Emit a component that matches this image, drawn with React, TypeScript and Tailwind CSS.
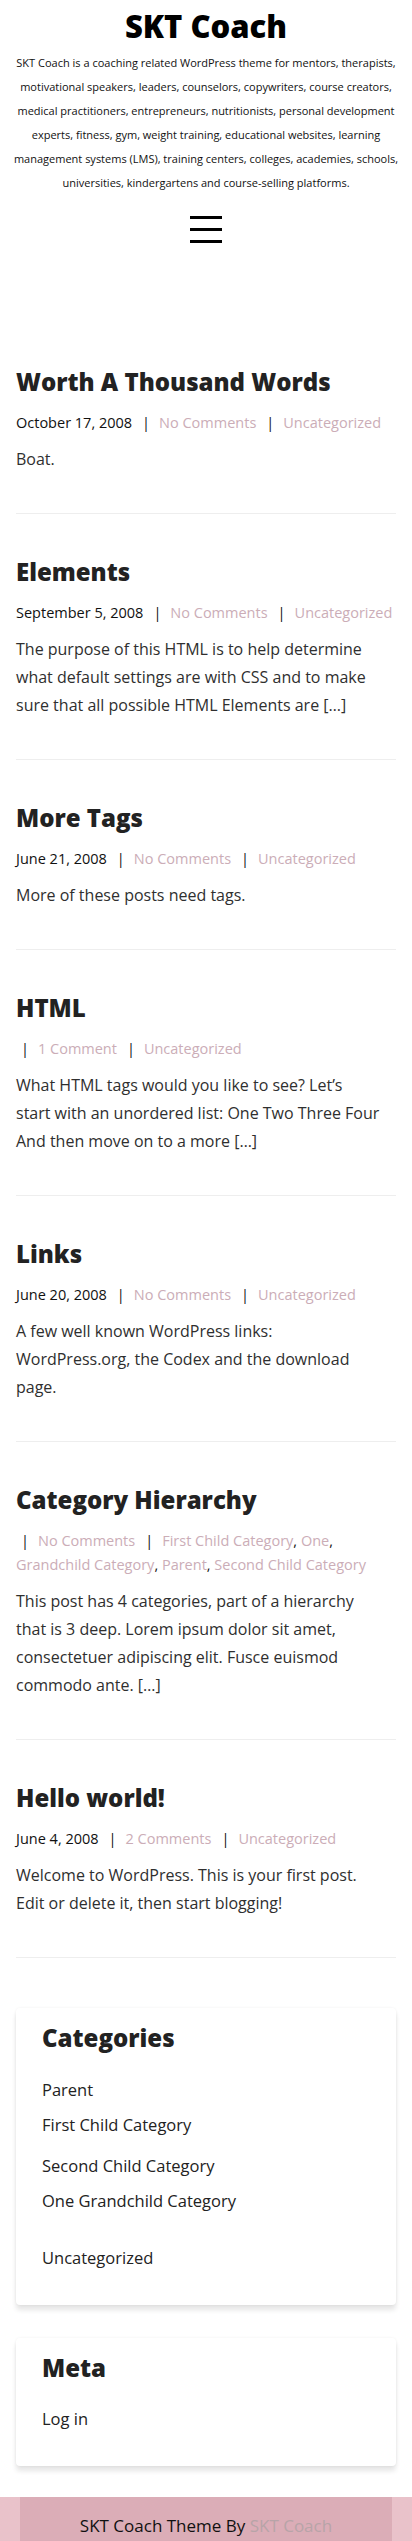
type Post = {
  title: string;
  date: string;
  comments: string;
  cats: string[][];
  body: string[];
};

const posts: Post[] = [
  {
    title: 'Worth A Thousand Words',
    date: 'October 17, 2008',
    comments: 'No Comments',
    cats: [['Uncategorized']],
    body: ['Boat.'],
  },
  {
    title: 'Elements',
    date: 'September 5, 2008',
    comments: 'No Comments',
    cats: [['Uncategorized']],
    body: [
      'The purpose of this HTML is to help determine',
      'what default settings are with CSS and to make',
      'sure that all possible HTML Elements are […]',
    ],
  },
  {
    title: 'More Tags',
    date: 'June 21, 2008',
    comments: 'No Comments',
    cats: [['Uncategorized']],
    body: ['More of these posts need tags.'],
  },
  {
    title: 'HTML',
    date: '',
    comments: '1 Comment',
    cats: [['Uncategorized']],
    body: [
      'What HTML tags would you like to see? Let’s',
      'start with an unordered list: One Two Three Four',
      'And then move on to a more […]',
    ],
  },
  {
    title: 'Links',
    date: 'June 20, 2008',
    comments: 'No Comments',
    cats: [['Uncategorized']],
    body: [
      'A few well known WordPress links:',
      'WordPress.org, the Codex and the download',
      'page.',
    ],
  },
  {
    title: 'Category Hierarchy',
    date: '',
    comments: 'No Comments',
    cats: [
      ['First Child Category', 'One'],
      ['Grandchild Category', 'Parent', 'Second Child Category'],
    ],
    body: [
      'This post has 4 categories, part of a hierarchy',
      'that is 3 deep. Lorem ipsum dolor sit amet,',
      'consectetuer adipiscing elit. Fusce euismod',
      'commodo ante. […]',
    ],
  },
  {
    title: 'Hello world!',
    date: 'June 4, 2008',
    comments: '2 Comments',
    cats: [['Uncategorized']],
    body: [
      'Welcome to WordPress. This is your first post.',
      'Edit or delete it, then start blogging!',
    ],
  },
];

const description = [
  'SKT Coach is a coaching related WordPress theme for mentors, therapists,',
  'motivational speakers, leaders, counselors, copywriters, course creators,',
  'medical practitioners, entrepreneurs, nutritionists, personal development',
  'experts, fitness, gym, weight training, educational websites, learning',
  'management systems (LMS), training centers, colleges, academies, schools,',
  'universities, kindergartens and course-selling platforms.',
];

function Sep({ first }: { first?: boolean }) {
  return (
    <span className={first ? 'ml-[5px] mr-[9px] text-[#111]' : 'ml-[10px] mr-[9px] text-[#111]'}>|</span>
  );
}

function PostMeta({ post }: { post: Post }) {
  return (
    <div className="mt-[11px] text-[14.5px] leading-[24px] text-[#111]">
      {post.date && <span>{post.date}</span>}
      <Sep first={!post.date} />
      <a className="text-[#cbadb7]">{post.comments}</a>
      <Sep />
      {post.cats.map((line, i) => (
        <span key={i}>
          {i > 0 && <br />}
          {line.map((c, j) => (
            <span key={c}>
              <a className="text-[#cbadb7]">{c}</a>
              {(j < line.length - 1 || i < post.cats.length - 1) && ', '}
            </span>
          ))}
        </span>
      ))}
    </div>
  );
}

function PostItem({ post }: { post: Post }) {
  return (
    <article className="mt-[40px] first:mt-0">
      <h2 className="text-[24px] leading-[36px] font-extrabold text-[#222]">{post.title}</h2>
      <PostMeta post={post} />
      <div className="mt-[10px] text-[16px] leading-[28px] text-[#2f2f2f]">
        {post.body.map((l) => (
          <span key={l} className="block">
            {l}
          </span>
        ))}
      </div>
      <hr className="mt-[40px] border-0 border-t border-[#eeeeee]" />
    </article>
  );
}

function Widget({ title, children, className }: { title: string; children: React.ReactNode; className?: string }) {
  return (
    <section
      className={`mx-4 rounded-[4px] bg-white px-[26px] pt-[14px] pb-[33px] shadow-[0_0_3px_rgba(0,0,0,0.06),0_5px_5px_rgba(0,0,0,0.1)] ${className ?? ''}`}
    >
      <h3 className="text-[24px] leading-[32px] font-extrabold text-[#222]">{title}</h3>
      {children}
    </section>
  );
}

export default function App() {
  return (
    <div className="w-[412px] bg-white font-['Open_Sans',sans-serif] text-[#222]">
      <header className="px-2 text-center">
        <h1 className="mt-[6px] text-[31px] leading-[40px] font-extrabold text-black">SKT Coach</h1>
        <p className="mt-[5px] text-[11px] leading-[24px] text-[#111]">
          {description.map((l) => (
            <span key={l} className="block whitespace-nowrap">
              {l}
            </span>
          ))}
        </p>
        <button className="mx-auto mt-[21px] flex w-[32px] flex-col gap-[9px]" aria-label="Menu">
          <span className="h-[3px] w-full bg-black" />
          <span className="h-[3px] w-full bg-black" />
          <span className="h-[3px] w-full bg-black" />
        </button>
      </header>

      <main className="mt-[121px] px-4">
        {posts.map((p) => (
          <PostItem key={p.title} post={p} />
        ))}
      </main>

      <aside className="mt-[50px]">
        <Widget title="Categories">
          <ul className="mt-[22px] text-[16.5px] leading-[28px] text-[#222]">
            <li>Parent</li>
            <li className="mt-[7px]">First Child Category</li>
            <li className="mt-[13px]">Second Child Category</li>
            <li className="mt-[7px]">One Grandchild Category</li>
            <li className="mt-[29px]">Uncategorized</li>
          </ul>
        </Widget>
        <Widget title="Meta" className="mt-[33px]">
          <ul className="mt-[21px] text-[16.5px] leading-[28px] text-[#222]">
            <li>Log in</li>
          </ul>
        </Widget>
      </aside>

      <footer className="mt-[31px] h-[45px] bg-[#e9c2ca]">
        <div className="mx-5 h-full bg-[#dbadb7] pt-[17px] text-center text-[17px] leading-[24px] text-[#111]">
          SKT Coach Theme By <a className="text-[#b7a4a8]">SKT Coach</a>
        </div>
      </footer>
    </div>
  );
}
